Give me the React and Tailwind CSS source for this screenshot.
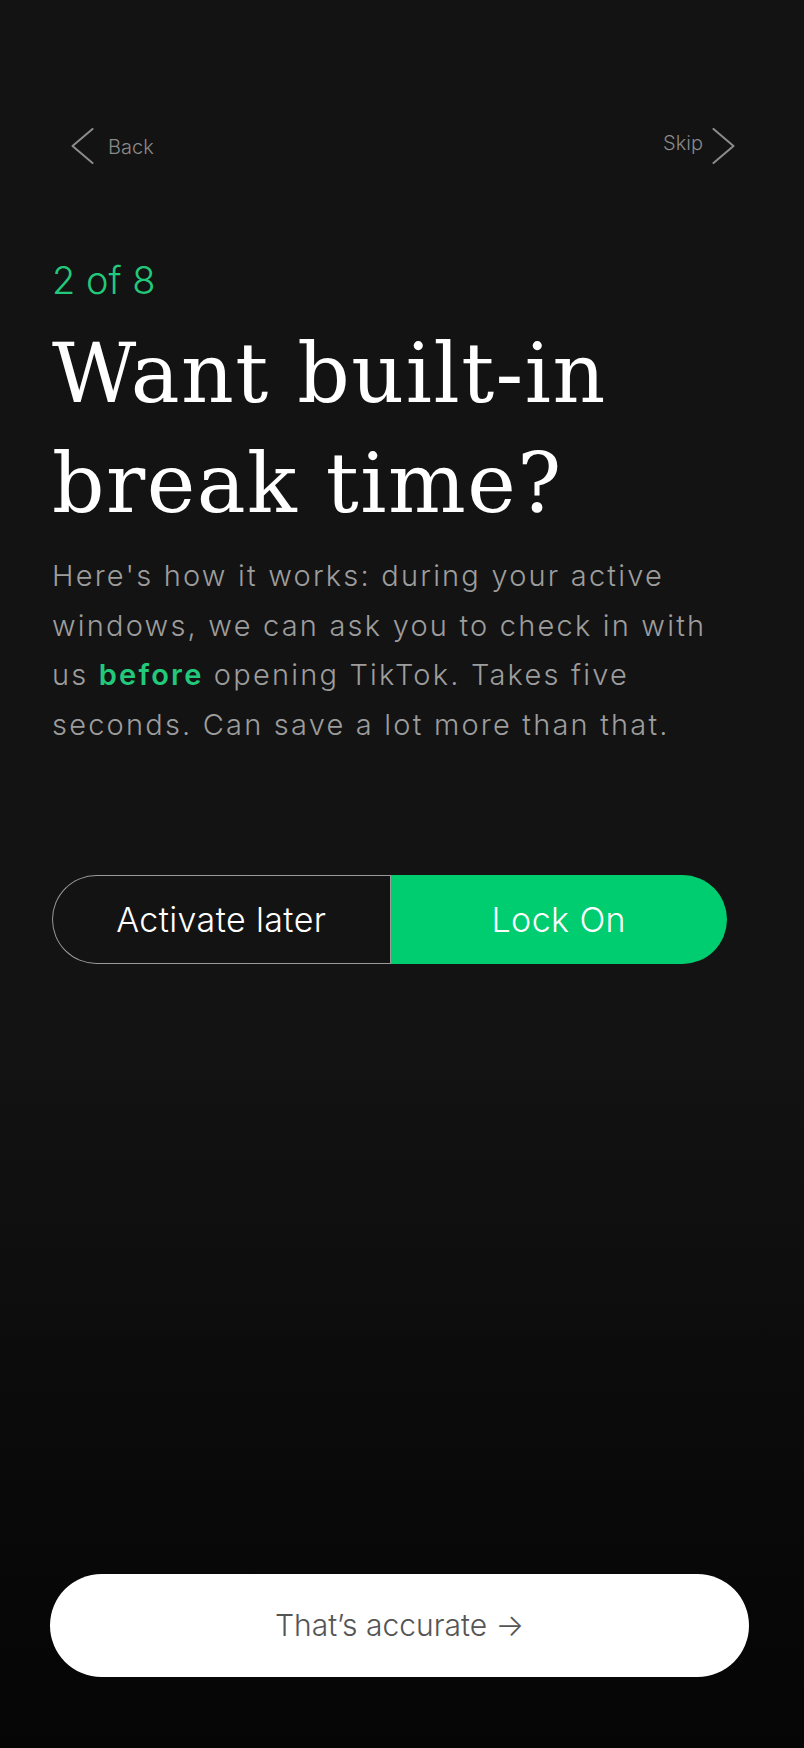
import React from 'react';

const sans = "font-['Inter','Liberation_Sans',sans-serif]";

function Chevron({ dir = 'left' }) {
  return (
    <svg width="23" height="36" viewBox="0 0 23 36" fill="none" className="shrink-0">
      <polyline
        points={dir === 'left' ? '21.5,1 1.5,18 21.5,35' : '1.5,1 21.5,18 1.5,35'}
        stroke="#8c8c8c"
        strokeWidth="2"
        strokeLinecap="round"
        strokeLinejoin="round"
      />
    </svg>
  );
}

export default function App() {
  return (
    <div className={`h-[1748px] w-full flex flex-col bg-gradient-to-b from-[#131313] via-[#131313] via-60% to-[#050505] ${sans}`}>
      {/* top nav */}
      <div className="flex items-center justify-between pl-[71px] pr-[69px] pt-[128px]">
        <button className="flex items-center gap-[14px] text-[20px] text-[#8a8a8a] font-light">
          <Chevron dir="left" />
          <span className="leading-none pt-[1px]">Back</span>
        </button>
        <button className="flex items-center gap-[9px] text-[20px] text-[#8a8a8a] font-light">
          <span className="leading-none -mt-[6px]">Skip</span>
          <Chevron dir="right" />
        </button>
      </div>

      <div className="px-[52px]">
        <div className="mt-[97px] text-[38px] leading-[38px] font-light text-[#22c97b]">2 of 8</div>

        <h1 className="mt-[20px] font-['DejaVu_Serif',serif] text-[82px] leading-[110px] font-normal text-white tracking-[1.5px]">
          Want built-in break time?
        </h1>

        <p className="mt-[12px] w-[685px] text-[29px] leading-[49.5px] font-light text-[#9d9d9d] tracking-[2.2px]">
          Here's how it works: during your active windows, we can ask you to check in with us{' '}
          <span className="font-semibold text-[#22c97b]">before</span> opening TikTok. Takes five seconds. Can save a lot more than that.
        </p>

        <div className="mt-[126px] w-[675px] h-[89px] flex">
          <button className="flex-1 h-full rounded-l-full border border-r-0 border-[#9a9a9a] text-white text-[34px] tracking-[0.4px] font-light">
            Activate later
          </button>
          <button className="flex-1 h-full rounded-r-full bg-[#00cc70] border-l border-[#9a9a9a] text-white text-[34px] tracking-[0.4px] font-light">
            Lock On
          </button>
        </div>
      </div>

      <div className="flex-1" />

      <div className="px-[50px] pb-[71px]">
        <button className="w-[699px] h-[103px] rounded-full bg-white text-[#555555] text-[30px] font-light">
          That’s accurate →
        </button>
      </div>
    </div>
  );
}
